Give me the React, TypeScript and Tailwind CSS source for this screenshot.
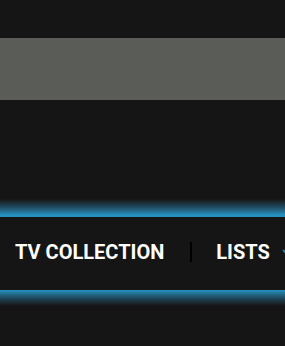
export default function App() {
    return (
        <div className="min-h-[346px] w-full bg-[#151515] font-['Roboto',sans-serif]">
            <div className="h-[38px]" />
            <div className="h-[62px] w-full bg-[#5a5c58]" />
            <div className="h-[99px]" />
            <div className="h-[16px] w-full bg-gradient-to-b from-[#151515] via-[#1d4a5f] to-[#2690c0]" />
            <nav className="flex h-[75px] w-full items-center overflow-hidden border-t-[2px] border-t-[#2690c0] bg-[#151515] pb-[4px] pl-[15px]">
                <span className="whitespace-nowrap text-[20px] leading-none font-bold uppercase text-white">TV Collection</span>
                <span className="ml-[26px] mr-[24px] h-[20px] w-[2px] shrink-0 bg-black" />
                <span className="whitespace-nowrap text-[20px] leading-none font-bold uppercase text-white">Lists</span>
                <svg className="ml-[12px] shrink-0" width="10" height="10" viewBox="0 0 10 10" fill="none">
                    <path d="M1 3l4 4 4-4" stroke="#2690c0" strokeWidth="1.6" />
                </svg>
            </nav>
            <div className="h-[16px] w-full bg-gradient-to-b from-[#2690c0] via-[#1d4a5f] to-[#151515]" />
        </div>
    );
}
